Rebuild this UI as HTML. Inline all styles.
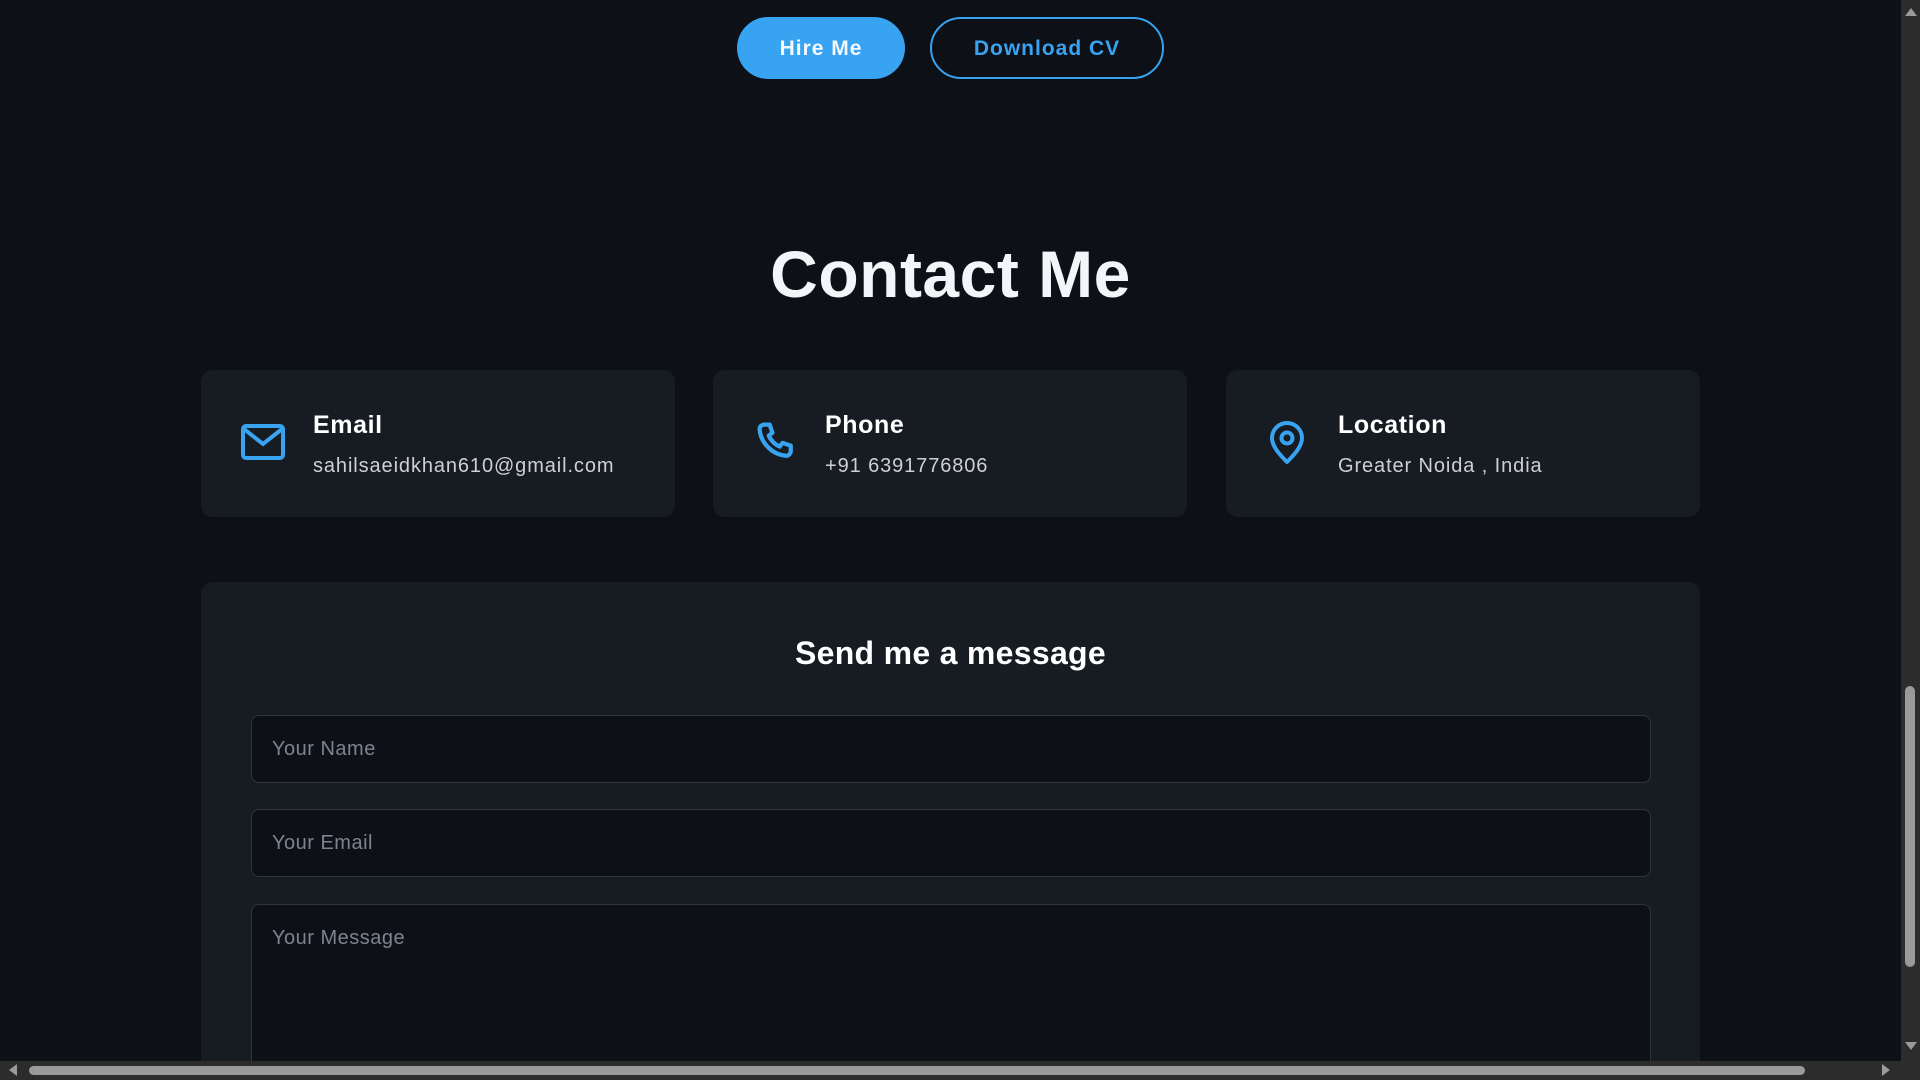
<!DOCTYPE html>
<html><head><meta charset="utf-8"><style>
*{box-sizing:border-box;margin:0;padding:0}
html,body{width:1920px;height:1080px;overflow:hidden;background:#0d1117;font-family:"Liberation Sans",sans-serif;color:#fff;position:relative}
.btn{position:absolute;top:17px;height:62px;border-radius:31px;font-weight:bold;font-size:21px;letter-spacing:1px;display:flex;align-items:center;justify-content:center;padding-top:2px}
.hire{left:737px;width:168px;background:#38a3f1;color:#f4f8ff}
.cv{left:930px;width:234px;border:2px solid #38a3f1;color:#38a3f1}
h1{position:absolute;left:0;width:1901px;text-align:center;top:236px;font-size:66px;font-weight:bold;letter-spacing:0.5px;color:#f3f5f8}
.card{position:absolute;top:370px;width:474px;height:147px;background:#171b22;border-radius:12px}
.card svg{position:absolute}
.lab{position:absolute;left:112px;top:41px;font-size:25px;font-weight:bold;color:#fff;letter-spacing:0.6px}
.val{position:absolute;left:112px;top:85px;font-size:20px;color:#cdd0d5;letter-spacing:0.9px}
.form{position:absolute;left:201px;top:582px;width:1499px;height:600px;background:#171b22;border-radius:12px}
h2{position:absolute;left:0;width:100%;text-align:center;top:53px;font-size:32px;font-weight:bold;color:#fff;letter-spacing:0.3px}
.in{position:absolute;left:50px;width:1400px;background:#0d1117;border:1px solid #2f353d;border-radius:8px;font-size:20px;color:#7d848e;padding-left:20px;letter-spacing:0.5px}
.sb{position:absolute;background:#2c2c2c}
</style></head><body>
<div class="btn hire">Hire Me</div>
<div class="btn cv">Download CV</div>
<h1>Contact Me</h1>
<div class="card" style="left:201px">
<svg style="left:40px;top:54px" width="44" height="36" viewBox="0 0 44 36"><rect x="2" y="2" width="40" height="32" rx="3" fill="none" stroke="#38a3f1" stroke-width="4"/><path d="M3 5 L22 20 L41 5" fill="none" stroke="#38a3f1" stroke-width="4"/></svg>
<div class="lab">Email</div><div class="val">sahilsaeidkhan610@gmail.com</div></div>
<div class="card" style="left:713px">
<svg style="left:42px;top:50px" width="44" height="44" viewBox="0 0 24 24"><path d="M5 2.5 L8 2.5 L9.5 7 L7.5 8.5 C8.5 11 11 13.5 13.5 14.5 L15 12.5 L19.5 14 L19.5 17 C19.5 18.2 18.5 19.5 17 19.5 C9.5 19 3 12.5 2.5 5 C2.5 3.5 3.8 2.5 5 2.5 Z" fill="none" stroke="#38a3f1" stroke-width="2.3" stroke-linejoin="round"/></svg>
<div class="lab">Phone</div><div class="val">+91 6391776806</div></div>
<div class="card" style="left:1226px">
<svg style="left:43px;top:51px" width="36" height="44" viewBox="0 0 36 44"><path d="M18 41 C10 33 3 25 3 17 A15 15 0 0 1 33 17 C33 25 26 33 18 41 Z" fill="none" stroke="#38a3f1" stroke-width="4" stroke-linejoin="round"/><circle cx="18" cy="17" r="5.5" fill="none" stroke="#38a3f1" stroke-width="4"/></svg>
<div class="lab">Location</div><div class="val">Greater Noida , India</div></div>
<div class="form"><h2>Send me a message</h2>
<div class="in" style="top:133px;height:68px;line-height:66px">Your Name</div>
<div class="in" style="top:227px;height:68px;line-height:66px">Your Email</div>
<div class="in" style="top:322px;height:300px;padding-top:22px">Your Message</div>
</div>
<div class="sb" style="left:1901px;top:0;width:19px;height:1080px"></div>
<div class="sb" style="left:0;top:1061px;width:1920px;height:19px"></div>
<div style="position:absolute;left:1905px;top:686px;width:10px;height:281px;background:#9a9a9a;border-radius:5px"></div>
<div style="position:absolute;left:29px;top:1066px;width:1776px;height:9px;background:#9a9a9a;border-radius:5px"></div>
<div style="position:absolute;left:1905px;top:8px;width:0;height:0;border-left:6px solid transparent;border-right:6px solid transparent;border-bottom:8px solid #9a9a9a"></div>
<div style="position:absolute;left:1905px;top:1042px;width:0;height:0;border-left:6px solid transparent;border-right:6px solid transparent;border-top:8px solid #9a9a9a"></div>
<div style="position:absolute;left:9px;top:1064px;width:0;height:0;border-top:6px solid transparent;border-bottom:6px solid transparent;border-right:8px solid #9a9a9a"></div>
<div style="position:absolute;left:1882px;top:1064px;width:0;height:0;border-top:6px solid transparent;border-bottom:6px solid transparent;border-left:8px solid #9a9a9a"></div>
</body></html>
